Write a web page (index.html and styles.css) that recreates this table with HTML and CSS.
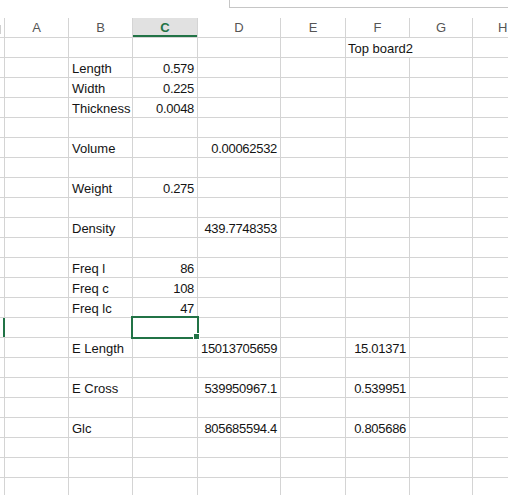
FILE: index.html
```html
<!DOCTYPE html>
<html>
<head>
<meta charset="utf-8">
<link rel="stylesheet" href="styles.css">
</head>
<body>
<div class="topbar"><div class="spacer"></div><div class="formula"></div></div>
<div class="sheet">
  <div class="row head"><div class="corner"><span class="mark"></span></div><div>A</div><div>B</div><div class="sel">C</div><div>D</div><div>E</div><div>F</div><div>G</div><div class="edge">H</div></div>
  <div class="row"><div></div><div></div><div></div><div></div><div></div><div></div><div class="wide">Top board2</div><div></div></div>
  <div class="row"><div></div><div></div><div>Length</div><div class="num">0.579</div><div></div><div></div><div></div><div></div><div></div></div>
  <div class="row"><div></div><div></div><div>Width</div><div class="num">0.225</div><div></div><div></div><div></div><div></div><div></div></div>
  <div class="row"><div></div><div></div><div>Thickness</div><div class="num">0.0048</div><div></div><div></div><div></div><div></div><div></div></div>
  <div class="row"><div></div><div></div><div></div><div></div><div></div><div></div><div></div><div></div><div></div></div>
  <div class="row"><div></div><div></div><div>Volume</div><div></div><div class="num">0.00062532</div><div></div><div></div><div></div><div></div></div>
  <div class="row"><div></div><div></div><div></div><div></div><div></div><div></div><div></div><div></div><div></div></div>
  <div class="row"><div></div><div></div><div>Weight</div><div class="num">0.275</div><div></div><div></div><div></div><div></div><div></div></div>
  <div class="row"><div></div><div></div><div></div><div></div><div></div><div></div><div></div><div></div><div></div></div>
  <div class="row"><div></div><div></div><div>Density</div><div></div><div class="num">439.7748353</div><div></div><div></div><div></div><div></div></div>
  <div class="row"><div></div><div></div><div></div><div></div><div></div><div></div><div></div><div></div><div></div></div>
  <div class="row"><div></div><div></div><div>Freq l</div><div class="num">86</div><div></div><div></div><div></div><div></div><div></div></div>
  <div class="row"><div></div><div></div><div>Freq c</div><div class="num">108</div><div></div><div></div><div></div><div></div><div></div></div>
  <div class="row"><div></div><div></div><div>Freq lc</div><div class="num">47</div><div></div><div></div><div></div><div></div><div></div></div>
  <div class="row"><div class="rowsel"></div><div></div><div></div><div class="active"><span class="handle"></span></div><div></div><div></div><div></div><div></div><div></div></div>
  <div class="row"><div></div><div></div><div>E Length</div><div></div><div class="num">15013705659</div><div></div><div class="num">15.01371</div><div></div><div></div></div>
  <div class="row"><div></div><div></div><div></div><div></div><div></div><div></div><div></div><div></div><div></div></div>
  <div class="row"><div></div><div></div><div>E Cross</div><div></div><div class="num">539950967.1</div><div></div><div class="num">0.539951</div><div></div><div></div></div>
  <div class="row"><div></div><div></div><div></div><div></div><div></div><div></div><div></div><div></div><div></div></div>
  <div class="row"><div></div><div></div><div>Glc</div><div></div><div class="num">805685594.4</div><div></div><div class="num">0.805686</div><div></div><div></div></div>
  <div class="row"><div></div><div></div><div></div><div></div><div></div><div></div><div></div><div></div><div></div></div>
  <div class="row"><div></div><div></div><div></div><div></div><div></div><div></div><div></div><div></div><div></div></div>
  <div class="row"><div></div><div></div><div></div><div></div><div></div><div></div><div></div><div></div><div></div></div>
</div>
</body>
</html>
```
FILE: styles.css
```css
html, body {
  margin: 0;
  padding: 0;
}
body {
  width: 508px;
  height: 495px;
  overflow: hidden;
  background: #fff;
  font-family: "Liberation Sans", Arial, sans-serif;
  font-size: 13px;
  color: #141414;
}
.topbar {
  height: 18px;
  display: flex;
}
.topbar .spacer {
  width: 229px;
}
.formula {
  flex: 1;
  height: 7px;
  border-left: 1px solid #c6c6c6;
  border-bottom: 1px solid #c6c6c6;
}
.sheet {
  display: flex;
  flex-direction: column;
  gap: 1px;
  background: #d4d4d4;
}
.row {
  display: grid;
  grid-template-columns: 4px 63px 63px 64px 82px 64px 63px 62px 1fr;
  gap: 1px;
  height: 19px;
}
.row > div {
  background: #fff;
  line-height: 17px;
  padding: 2px 3px 0;
  white-space: nowrap;
  min-width: 0;
}
.row > div:first-child {
  padding: 0;
  position: relative;
}
.num {
  text-align: right;
  letter-spacing: -0.3px;
}
.row > .wide {
  grid-column: span 2;
  padding-left: 2px;
}
.head > div {
  text-align: center;
  color: #555;
  line-height: 19px;
  padding: 0;
}
.head > .edge {
  text-align: left;
  padding-left: 25px;
}
.head > .sel {
  background: #e1e1e1;
  color: #217346;
  font-weight: bold;
  box-shadow: inset 0 -2px #217346;
}
.corner .mark {
  display: block;
  width: 1px;
  height: 9px;
  margin-top: 7px;
  background: #cfcfcf;
}
.rowsel::after {
  content: "";
  position: absolute;
  left: 3px;
  top: 0;
  width: 2px;
  height: 100%;
  background: #217346;
  z-index: 2;
}
.row > .active {
  position: relative;
  outline: 2px solid #217346;
  z-index: 1;
}
.handle {
  position: absolute;
  right: -3px;
  bottom: -3px;
  width: 5px;
  height: 5px;
  background: #217346;
  border: 1px solid #fff;
}
```
